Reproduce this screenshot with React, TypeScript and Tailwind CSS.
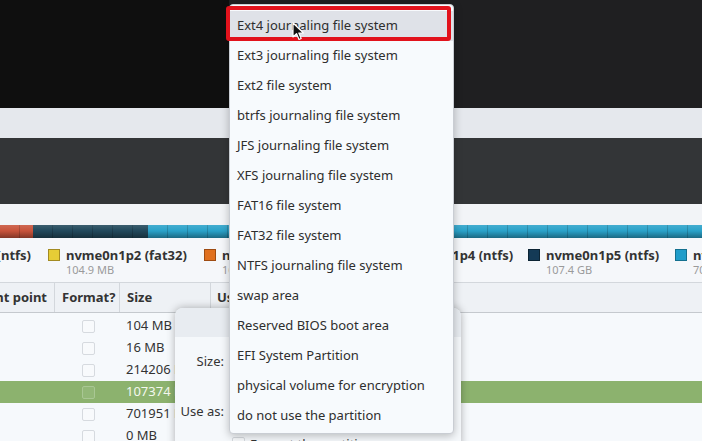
const fsTypes = [
  "Ext4 journaling file system",
  "Ext3 journaling file system",
  "Ext2 file system",
  "btrfs journaling file system",
  "JFS journaling file system",
  "XFS journaling file system",
  "FAT16 file system",
  "FAT32 file system",
  "NTFS journaling file system",
  "swap area",
  "Reserved BIOS boot area",
  "EFI System Partition",
  "physical volume for encryption",
  "do not use the partition",
];

const legend = [
  { name: "nvme0n1p2 (fat32)", size: "104.9 MB", swatch: "bg-[#e6cd36] border-[#a38b22]", width: "w-[156px]" },
  { name: "nvme0n1p3", size: "16.8 MB", swatch: "bg-[#e0701f] border-[#9e4c12]", width: "w-[178px]" },
  { name: "nvme0n1p4 (ntfs)", size: "214.2 GB", swatch: "bg-[#1f4a63] border-[#12303f]", width: "w-[146px]" },
  { name: "nvme0n1p5 (ntfs)", size: "107.4 GB", swatch: "bg-[#143a56] border-[#0c2434]", width: "w-[147px]" },
  { name: "nvme0n1p6 (ext4)", size: "70.2 GB", swatch: "bg-[#1f9dca] border-[#14708f]", width: "w-[160px]" },
];

const rows = [
  { size: "104 MB" },
  { size: "16 MB" },
  { size: "214206 MB" },
  { size: "107374 MB", selected: true },
  { size: "701951 MB" },
  { size: "0 MB" },
];

const stripes =
  "bg-[repeating-linear-gradient(90deg,transparent_0_19px,rgba(0,0,0,0.18)_19px_20px)]";

function PartitionBar() {
  return (
    <div className="relative flex h-[13px]">
      <div className={`w-[33px] bg-[#c8533b] ${stripes}`} />
      <div className={`w-[115px] bg-[#21485b] ${stripes}`} />
      <div className={`flex-1 bg-[#2aa2c9] ${stripes}`} />
      <div className="pointer-events-none absolute inset-0 bg-[linear-gradient(180deg,rgba(255,255,255,0.12)_0%,rgba(255,255,255,0)_45%,rgba(0,0,0,0.35)_100%)]" />
    </div>
  );
}

function Checkbox({ on }: { on?: boolean }) {
  return (
    <span
      className={`block h-[13px] w-[13px] shrink-0 rounded-[2px] border ${
        on ? "border-[#a9c794] bg-[#93b878]" : "border-[#d6dadf] bg-[#f8fafc]"
      }`}
    />
  );
}

function Cursor() {
  return (
    <svg
      className="absolute left-[292px] top-[22px]"
      width="13"
      height="19"
      viewBox="0 0 13 19"
    >
      <path
        d="M1 1 L1 15 L4.5 11.6 L7 17.5 L9.2 16.5 L6.8 11 L11.5 11 Z"
        fill="#111"
        stroke="#fff"
        strokeWidth="1.2"
        strokeLinejoin="round"
      />
    </svg>
  );
}

export default function App() {
  return (
    <div className="relative h-[441px] w-[702px] overflow-hidden bg-[#f6f9fc] font-['Noto_Sans',sans-serif] text-[#333]">
      {/* background: installer window */}
      <div className="flex h-[108px]">
        <div className="w-[229px] bg-[#0f0f0f]" />
        <div className="flex-1 bg-[#1f1f21]" />
      </div>
      <div className="h-[30px] bg-[#e5e8ed]" />
      <div className="h-[66px] bg-[#333537]" />
      <div className="h-[21px] bg-[#f2f4f7]" />
      <PartitionBar />

      <div className="flex h-[44px] bg-[#f5f7fa] pt-[9px]">
        <div className="mr-[17px] flex w-[31px] shrink-0 justify-end overflow-hidden whitespace-nowrap text-[13px] font-bold leading-[16px]">
          <span className="shrink-0">nvme0n1p1 (ntfs)</span>
        </div>
        {legend.map((item) => (
          <div key={item.name} className={`flex shrink-0 gap-[6px] ${item.width}`}>
            <span className={`mt-[2px] h-[12px] w-[12px] shrink-0 border ${item.swatch}`} />
            <div className="whitespace-nowrap">
              <div className="text-[13px] font-bold leading-[16px] text-[#333]">{item.name}</div>
              <div className="text-[11px] leading-[14px] text-[#9a9a9a]">{item.size}</div>
            </div>
          </div>
        ))}
      </div>

      <div className="flex h-[31px] border-y border-t-[#d3d7dc] border-b-[#c5c9ce] border-b-dashed bg-[#eef1f5] text-[13px] font-bold">
        <div className="flex w-[55px] items-center justify-end overflow-hidden whitespace-nowrap border-r border-[#d3d7dc] pr-[7px]">
          <span className="shrink-0">Mount point</span>
        </div>
        <div className="flex w-[65px] items-center border-r border-[#d3d7dc] px-[7px]">Format?</div>
        <div className="flex w-[91px] items-center border-r border-[#d3d7dc] px-[7px]">Size</div>
        <div className="flex items-center px-[6px]">Used</div>
      </div>

      <div className="pt-[2px] text-[13px]">
        {rows.map((row) => (
          <div
            key={row.size}
            className={`flex h-[22px] items-center ${row.selected ? "bg-[#8cb26e] text-[#f4f8ef]" : ""}`}
          >
            <div className="w-[55px]" />
            <div className="flex w-[65px] justify-center pl-[2px]">
              <Checkbox on={row.selected} />
            </div>
            <div className="whitespace-nowrap px-[6px]">{row.size}</div>
          </div>
        ))}
      </div>

      {/* edit partition dialog */}
      <div className="absolute left-[175px] top-[308px] h-[140px] w-[286px] overflow-hidden rounded-t-[8px] bg-[#f5f8fb] text-[13px] shadow-[0_0_9px_rgba(0,0,0,0.3)]">
        <div className="h-[29px] bg-[#e8ecf1]" />
        <div className="flex flex-col pt-[15px]">
          <div className="flex h-[20px] items-center">
            <span className="w-[49px] text-right">Size:</span>
          </div>
          <div className="mt-[30px] flex h-[20px] items-center">
            <span className="w-[49px] text-right">Use as:</span>
          </div>
          <div className="mt-[13px] flex h-[20px] items-start gap-[5px] pl-[57px]">
            <span className="mt-[2px]">
              <Checkbox />
            </span>
            <span className="leading-[18px]">Format the partition</span>
          </div>
        </div>
      </div>

      {/* file system dropdown */}
      <div className="absolute left-[229px] top-[4px] w-[225px] rounded-[4px] border border-[#c9cdd3] bg-[#f7fafd] pb-[2px] pt-[6px] shadow-[0_2px_8px_rgba(0,0,0,0.25)]">
        {fsTypes.map((t, i) => (
          <div
            key={t}
            className={`flex h-[30px] items-center whitespace-nowrap px-[7px] text-[13px] text-[#2e2e2e] ${
              i === 0 ? "bg-[#dfe2e8]" : ""
            }`}
          >
            {t}
          </div>
        ))}
        <div className="absolute left-[-4px] top-[1px] h-[35px] w-[225px] rounded-[3px] border-[4px] border-[#e2121c]" />
      </div>

      <Cursor />
    </div>
  );
}
